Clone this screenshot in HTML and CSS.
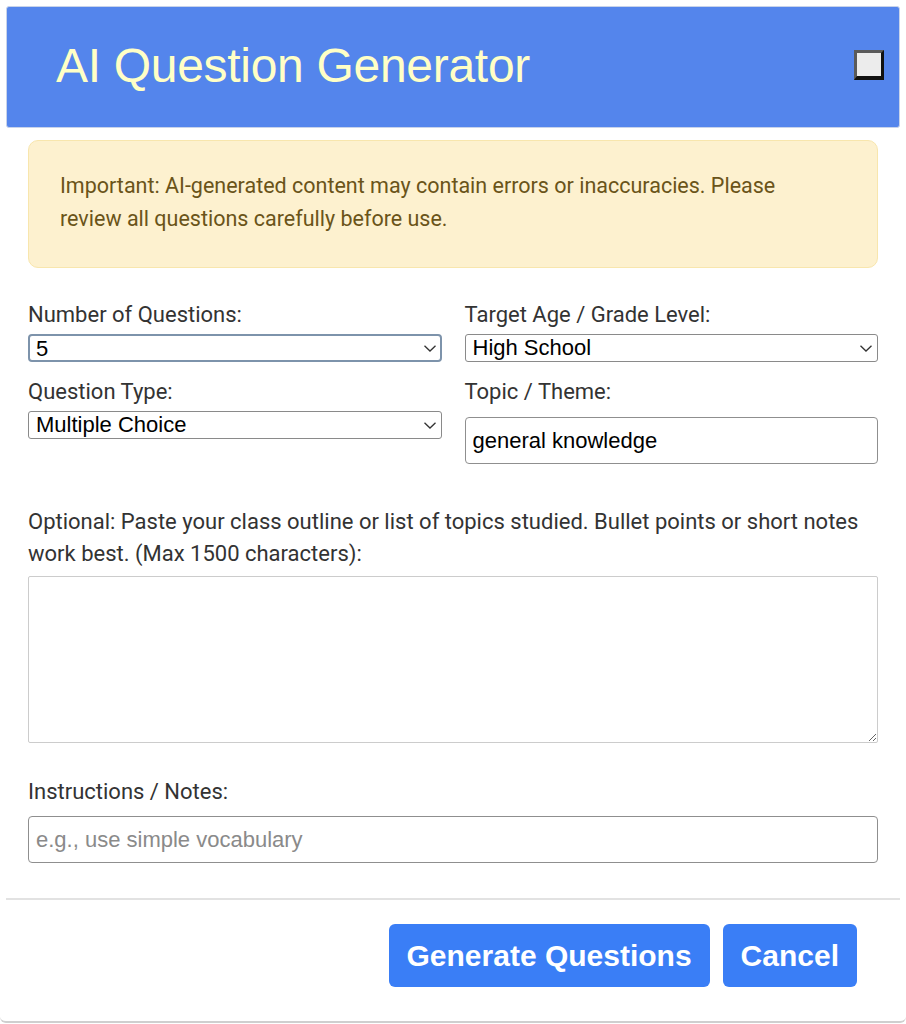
FILE: index.html
```html
<!DOCTYPE html>
<html lang="en">
<head>
<meta charset="utf-8">
<title>AI Question Generator</title>
<link rel="stylesheet" href="styles.css">
</head>
<body>
<div class="dialog">
  <header class="header">
    <h1 class="title">AI Question Generator</h1>
    <span class="close-box" aria-hidden="true"></span>
  </header>
  <main class="body">
    <div class="warning">Important: AI-generated content may contain errors or inaccuracies. Please review all questions carefully before use.</div>
    <div class="grid">
      <div class="field">
        <label class="label" for="num">Number of Questions:</label>
        <div class="select-wrap">
          <select id="num" class="select focused"><option>5</option></select>
          <svg class="chev" width="12" height="7" viewBox="0 0 12 7"><path d="M0.5 0.8 L6 6 L11.5 0.8" fill="none" stroke="#333" stroke-width="1.3"/></svg>
        </div>
      </div>
      <div class="field">
        <label class="label" for="grade">Target Age / Grade Level:</label>
        <div class="select-wrap">
          <select id="grade" class="select"><option>High School</option></select>
          <svg class="chev" width="12" height="7" viewBox="0 0 12 7"><path d="M0.5 0.8 L6 6 L11.5 0.8" fill="none" stroke="#333" stroke-width="1.3"/></svg>
        </div>
      </div>
      <div class="field">
        <label class="label" for="type">Question Type:</label>
        <div class="select-wrap">
          <select id="type" class="select"><option>Multiple Choice</option></select>
          <svg class="chev" width="12" height="7" viewBox="0 0 12 7"><path d="M0.5 0.8 L6 6 L11.5 0.8" fill="none" stroke="#333" stroke-width="1.3"/></svg>
        </div>
      </div>
      <div class="field">
        <label class="label" for="topic">Topic / Theme:</label>
        <input id="topic" class="text-input topic" type="text" value="general knowledge">
      </div>
    </div>
    <label class="label long" for="outline">Optional: Paste your class outline or list of topics studied. Bullet points or short notes work best. (Max 1500 characters):</label>
    <textarea id="outline" class="textarea"></textarea>
    <label class="label notes-label" for="notes">Instructions / Notes:</label>
    <input id="notes" class="text-input" type="text" placeholder="e.g., use simple vocabulary">
  </main>
  <footer class="footer">
    <button class="btn">Generate Questions</button>
    <button class="btn">Cancel</button>
  </footer>
</div>
</body>
</html>
```

FILE: styles.css
```css
* { box-sizing: border-box; }

html, body {
  margin: 0;
  padding: 0;
  background: #ffffff;
}

body {
  font-family: Roboto, "Liberation Sans", Arial, sans-serif;
  color: #333333;
}

.dialog {
  padding: 6px 6px 0;
  border-bottom: 2px solid #cfcfcf;
  border-radius: 0 0 6px 6px;
  height: 1023px;
  display: flex;
  flex-direction: column;
}

.header {
  height: 122px;
  background: #5485ec;
  border: 1px solid #c8d3ea;
  border-radius: 3px;
  display: flex;
  align-items: center;
  justify-content: space-between;
  padding: 0 15px 0 49px;
}

.title {
  margin: 0;
  font-family: "Liberation Sans", Arial, sans-serif;
  font-weight: normal;
  font-size: 48px;
  color: #ffffc6;
  letter-spacing: -0.3px;
  position: relative;
  top: -2px;
}

.close-box {
  width: 30px;
  height: 30px;
  background: #ececec;
  border-style: solid;
  border-width: 3px 3px 4px 3px;
  border-color: #5a5a5a #111111 #111111 #5a5a5a;
  margin-top: -4px;
}

.body {
  padding: 12px 22px 0;
  display: flex;
  flex-direction: column;
}

.warning {
  height: 128px;
  background: #fdf1cf;
  border: 1px solid #f8e6ad;
  border-radius: 10px;
  color: #6a5419;
  font-size: 21.5px;
  line-height: 33px;
  padding: 28px 60px 0 31px;
}

.grid {
  display: grid;
  grid-template-columns: 1fr 1fr;
  column-gap: 23px;
  row-gap: 17px;
  margin-top: 34px;
}

.field {
  display: flex;
  flex-direction: column;
}

.label {
  display: block;
  font-size: 22px;
  line-height: 26px;
  color: #333333;
  margin-bottom: 6px;
}

.select-wrap {
  position: relative;
}

.select {
  appearance: none;
  -webkit-appearance: none;
  width: 100%;
  height: 28px;
  font-family: "Liberation Sans", Arial, sans-serif;
  font-size: 22px;
  color: #000;
  background: #fff;
  border: 1px solid #8a8a8a;
  border-radius: 3px;
  padding: 0 0 0 7px;
  margin: 0;
  line-height: 26px;
}

.select.focused {
  border: 2px solid #7d93ab;
  border-radius: 4px;
  padding-left: 6px;
}

.chev {
  position: absolute;
  right: 6px;
  top: 11px;
  pointer-events: none;
}

.text-input {
  width: 100%;
  height: 47px;
  font-family: "Liberation Sans", Arial, sans-serif;
  font-size: 22px;
  color: #000;
  background: #fff;
  border: 1px solid #8f8f8f;
  border-radius: 4px;
  padding: 0 7px;
  margin: 0;
}

.text-input::placeholder {
  color: #8a8a8a;
}

.topic {
  margin-top: 6px;
}

.long {
  margin-top: 42px;
  line-height: 32px;
}

.textarea {
  width: 100%;
  height: 167px;
  border: 1px solid #cccccc;
  border-radius: 2px;
  font-family: "Liberation Sans", Arial, sans-serif;
  font-size: 20px;
  margin: 0;
  resize: both;
}

.notes-label {
  margin-top: 36px;
  margin-bottom: 11px;
}

.footer {
  margin-top: 35px;
  border-top: 2px solid #e2e2e2;
  display: flex;
  justify-content: flex-end;
  gap: 13px;
  padding: 24px 43px 0;
}

.btn {
  height: 63px;
  background: #3a7ef6;
  color: #ffffff;
  border: none;
  border-radius: 6px;
  font-family: "Liberation Sans", Arial, sans-serif;
  font-weight: bold;
  font-size: 30px;
  padding: 0 18px;
  cursor: pointer;
}
```
